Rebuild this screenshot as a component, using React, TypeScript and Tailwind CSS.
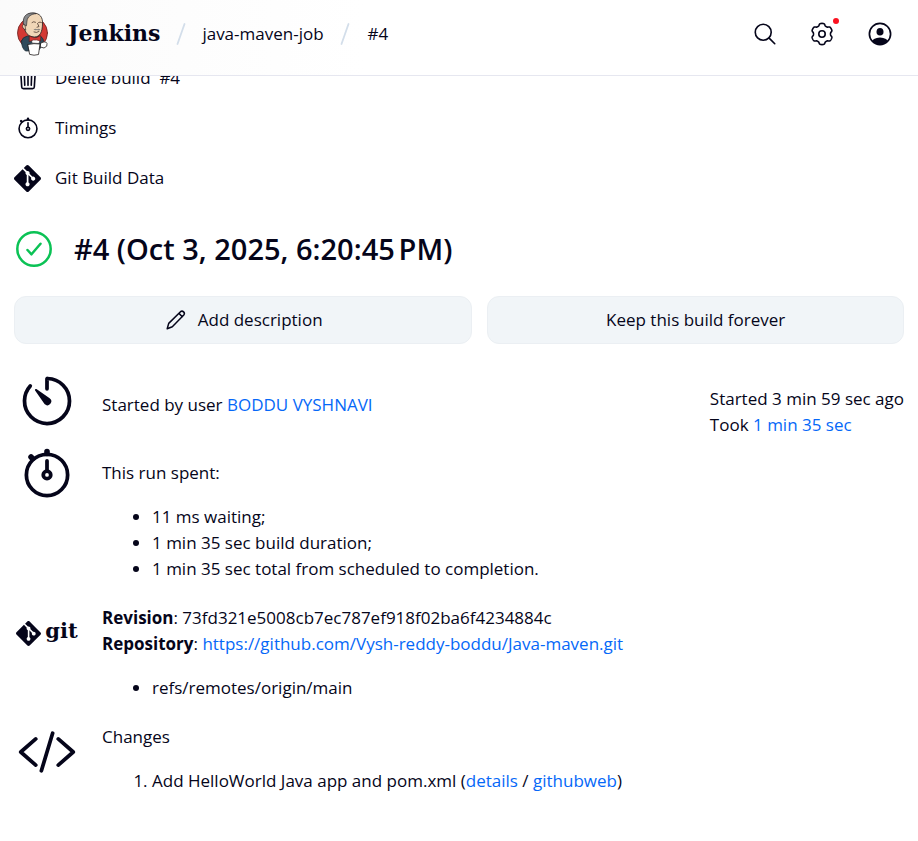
import React from "react";
import { SiGit } from "react-icons/si";

const stroke = {
  fill: "none",
  stroke: "currentColor",
  strokeWidth: 32,
  strokeLinecap: "round" as const,
  strokeLinejoin: "round" as const,
};

function TrashIcon() {
  return (
    <svg viewBox="0 0 512 512" className="size-[26px]" aria-hidden="true" {...stroke}>
      <path d="M112 112l20 320c.95 18.49 14.4 32 32 32h184c17.67 0 30.87-13.51 32-32l20-320M80 112h352M192 112V72a23.93 23.93 0 0124-24h80a23.93 23.93 0 0124 24v40M256 176v224M184 176l8 224M328 176l-8 224" />
    </svg>
  );
}

function StopwatchIcon({ className }: { className: string }) {
  return (
    <svg viewBox="0 0 512 512" className={className} aria-hidden="true" {...stroke}>
      <circle cx="256" cy="272" r="176" />
      <path d="M256 232v-80" />
      <path d="M256 88V72M132 132l-12-12" strokeWidth="48" />
      <circle cx="256" cy="272" r="32" />
    </svg>
  );
}

function TimerIcon() {
  return (
    <svg viewBox="0 0 512 512" className="size-15" aria-hidden="true" {...stroke}>
      <path d="M112.91 128A191.85 191.85 0 0064 254c-1.18 106.35 85.65 193.8 192 194 106.2.2 192-85.83 192-192 0-104.54-83.55-189.61-187.5-192a4.36 4.36 0 00-4.5 4.37V152" />
      <path
        d="M233.38 278.63l-79-113a8.13 8.13 0 0111.32-11.32l113 79a32.5 32.5 0 01-37.25 53.26 33.21 33.21 0 01-8.07-7.93z"
        fill="currentColor"
        stroke="none"
      />
    </svg>
  );
}

function CodeIcon() {
  return (
    <svg viewBox="0 0 512 512" className="size-15" aria-hidden="true" {...stroke}>
      <path d="M160 368L32 256l128-112M352 368l128-112-128-112M304 96l-96 320" />
    </svg>
  );
}

function SearchIcon() {
  return (
    <svg viewBox="0 0 512 512" className="size-[26px]" aria-hidden="true" {...stroke}>
      <circle cx="221" cy="221" r="157" />
      <path d="M338 338l110 110" />
    </svg>
  );
}

// Outline of a gear with six soft teeth, the first one pointing up.
const gearPoints = Array.from({ length: 180 }, (_, i) => {
  const angle = (i * Math.PI) / 90;
  const radius = 9.5 + 1.1 * Math.tanh(2 * Math.cos(6 * angle) + 0.5);
  return `${(12 + radius * Math.sin(angle)).toFixed(2)},${(12 - radius * Math.cos(angle)).toFixed(2)}`;
}).join(" ");

function GearIcon() {
  return (
    <svg viewBox="0 0 24 24" className="size-6" aria-hidden="true" {...stroke} strokeWidth="1.6">
      <polygon points={gearPoints} />
      <circle cx="12" cy="12" r="3.2" />
    </svg>
  );
}

function UserIcon() {
  return (
    <svg viewBox="0 0 24 24" className="size-6" aria-hidden="true">
      <clipPath id="user-disc">
        <circle cx="12" cy="12" r="10.5" />
      </clipPath>
      <circle cx="12" cy="12" r="10.6" fill="none" stroke="currentColor" strokeWidth="1.7" />
      <ellipse cx="12" cy="9.7" rx="3.5" ry="3.8" fill="currentColor" />
      <ellipse cx="12" cy="21" rx="8.5" ry="5.5" fill="currentColor" clipPath="url(#user-disc)" />
    </svg>
  );
}

function PencilIcon() {
  return (
    <svg viewBox="0 0 24 24" className="size-6" aria-hidden="true" {...stroke} strokeWidth="1.5">
      <path d="M3.200 20.800l1.500-5.400L16.500 3.700q1.600-1.300 3.100.2t.2 3.100L8.300 18.800zM15 5.400l3.300 3.300" />
    </svg>
  );
}

function SuccessIcon() {
  return (
    <svg viewBox="0 0 36 36" className="size-9 text-[#0bc255]" aria-hidden="true" {...stroke} strokeWidth="2.5">
      <circle cx="18" cy="18" r="16.7" />
      <path d="M11.500 19l4 4.300 9-10.500" />
    </svg>
  );
}

function JenkinsMark() {
  return (
    <svg viewBox="0 0 32 44" className="h-11 w-8" aria-hidden="true" strokeLinejoin="round" strokeLinecap="round">
      <ellipse cx="16.500" cy="21" rx="15" ry="15.500" fill="#d33833" stroke="#6b2422" strokeWidth=".8" />
      <path d="M5.500 29q1-4 6-5l10-.5q6 1 6 6l-2 5-3 4-13 .5q-4-3-4-10z" fill="#2f4a5b" stroke="#1c2b35" strokeWidth=".8" />
      <path d="M8.500 17C6 8 9 1 17 1c7 0 10 4.500 9.500 11-.2 8-2.500 13-8 13-5 0-8.500-3-10-8z" fill="#f0d6b7" stroke="#231f20" strokeWidth=".8" />
      <path d="M7.500 13C6 5 10 1 16 1q2.500 0 4 .700c-5 .3-8.500 3-9 7.300l-.5 4.500z" fill="#87898b" stroke="#231f20" strokeWidth=".6" />
      <path d="M8.500 12.500q-3-.5-1.500 3.500l2.500 2z" fill="#f0d6b7" stroke="#231f20" strokeWidth=".6" />
      <path d="M16 10.500q1.500-1.500 3.500-.3M22.500 10.500q1.500-1 3 0M21.500 11.500l1.500 3-2 .700M18 20q2.500 1.300 5-.5" fill="none" stroke="#4b372d" strokeWidth=".8" />
      <path d="M17.500 17.500q2-1.300 3.500-.300 2-.8 3.500.3-2 1.500-3.500.5-2 .8-3.500-.5z" fill="#8a8580" />
      <path d="M15 25l1 6 7 .5 2-7-5 1.500z" fill="#fff" stroke="#231f20" strokeWidth=".5" />
      <path d="M13.500 24l4.500 1.800q1-.8 2 0L24.500 23.500v5.500L20 27.800q-1 .7-2 0l-4.500 1.700z" fill="#d33833" stroke="#5c1715" strokeWidth=".6" />
      <path d="M25 31q5-2.500 6 .5t-3 4.500l-3.500-1z" fill="#fff" stroke="#231f20" strokeWidth=".8" />
      <path d="M12 32.500q6-1.500 12-.5l-1.500 10.500q-4.500 1.500-8.500 0z" fill="#fff" stroke="#231f20" strokeWidth=".8" />
    </svg>
  );
}

function Slash() {
  return (
    <svg viewBox="0 0 10 22" className="h-[22px] w-2.5" aria-hidden="true">
      <path d="M8.500 1L1.500 21" stroke="#d3deea" strokeWidth="1.8" strokeLinecap="round" />
    </svg>
  );
}

function Link({ children }: { children: React.ReactNode }) {
  return (
    <a href="#" className="text-[#0568f8]">
      {children}
    </a>
  );
}

function Row({ icon, children }: { icon: React.ReactNode; children: React.ReactNode }) {
  return (
    <section className="flex gap-[25px] pl-[3px]">
      <div className="flex size-15 shrink-0 items-center justify-center">{icon}</div>
      {children}
    </section>
  );
}

export default function App() {
  return (
    <div className="bg-white font-['Open_Sans','Noto_Sans',sans-serif] text-[17px] leading-[26px] text-[#05051a]">
      <header className="relative z-10 flex h-[76px] items-center border-b border-[#e6e7f0] bg-linear-to-r from-[#fbfbfb] to-white to-40% pr-3.5 pb-2 pl-4">
        <a href="#" className="flex items-center gap-5">
          <JenkinsMark />
          <span className="pb-0.5 font-['DejaVu_Serif',serif] text-[22px] font-bold">Jenkins</span>
        </a>
        <nav aria-label="Breadcrumb" className="ml-4 flex items-center gap-4">
          <Slash />
          <a href="#">java-maven-job</a>
          <Slash />
          <a href="#" className="ml-0.5">#4</a>
        </nav>
        <div className="ml-auto flex gap-2.5">
          <button aria-label="Search" className="flex size-12 items-center justify-end pr-2.5">
            <SearchIcon />
          </button>
          <button aria-label="Manage Jenkins" className="relative flex size-12 items-center justify-center">
            <GearIcon />
            <span className="absolute top-2 right-[7px] size-1.5 rounded-full bg-[#fb1220]" />
          </button>
          <button aria-label="User" className="flex size-12 items-center justify-center">
            <UserIcon />
          </button>
        </div>
      </header>

      <main className="-mt-[23px] px-3.5 pb-11">
        <nav aria-label="Build">
          <a href="#" className="flex h-[50px] items-center gap-3.5">
            <span className="flex w-[27px] justify-center"><TrashIcon /></span>
            <span className="whitespace-pre">Delete build  #4</span>
          </a>
          <a href="#" className="flex h-[50px] items-center gap-3.5">
            <span className="flex w-[27px] justify-center"><StopwatchIcon className="size-[26px]" /></span>
            Timings
          </a>
          <a href="#" className="flex h-[50px] items-center gap-3.5">
            <SiGit className="size-[27px]" aria-hidden="true" />
            Git Build Data
          </a>
        </nav>

        <div className="mt-7 flex items-center gap-[22px] pl-0.5">
          <SuccessIcon />
          <h1 className="text-[29px] leading-9 font-semibold">#4 (Oct 3, 2025, 6:20:45&#8239;PM)</h1>
        </div>

        <div className="mt-[29px] grid grid-cols-[11fr_10fr] gap-[15px]">
          <button className="flex h-12 items-center justify-center gap-2.5 rounded-xl border border-[#ebeff3] bg-[#f1f5f8]">
            <PencilIcon />
            Add description
          </button>
          <button className="h-12 rounded-xl border border-[#ebeff3] bg-[#f1f5f8]">Keep this build forever</button>
        </div>

        <div className="mt-[27px] flex flex-col gap-[5px]">
          <Row icon={<TimerIcon />}>
            <p className="pt-[21px]">
              Started by user <Link>BODDU VYSHNAVI</Link>
            </p>
            <p className="ml-auto pt-[15px]">
              Started 3 min 59 sec ago
              <br />
              Took <Link>1 min 35 sec</Link>
            </p>
          </Row>
          <Row icon={<StopwatchIcon className="size-15" />}>
            <div className="pt-[17px]">
              <p>This run spent:</p>
              <ul className="mt-[18px] mb-4 list-disc pl-[50px]">
                <li>11 ms waiting;</li>
                <li>1 min 35 sec build duration;</li>
                <li>1 min 35 sec total from scheduled to completion.</li>
              </ul>
            </div>
          </Row>
          <Row
            icon={
              <span className="flex items-center gap-1">
                <SiGit className="size-[25px]" aria-hidden="true" />
                <span className="pb-1 font-['DejaVu_Serif',serif] text-[21px] font-bold">git</span>
              </span>
            }
          >
            <div className="pt-0.5">
              <p>
                <b>Revision</b>: 73fd321e5008cb7ec787ef918f02ba6f4234884c
              </p>
              <p>
                <b>Repository</b>: <Link>https://github.com/Vysh-reddy-boddu/Java-maven.git</Link>
              </p>
              <ul className="mt-[18px] mb-4 list-disc pl-[50px]">
                <li>refs/remotes/origin/main</li>
              </ul>
            </div>
          </Row>
          <Row icon={<CodeIcon />}>
            <div className="pt-0.5">
              <p>Changes</p>
              <ol className="mt-[18px] list-decimal pl-[50px]">
                <li>
                  Add HelloWorld Java app and pom.xml (<Link>details</Link> / <Link>githubweb</Link>)
                </li>
              </ol>
            </div>
          </Row>
        </div>
      </main>
    </div>
  );
}
